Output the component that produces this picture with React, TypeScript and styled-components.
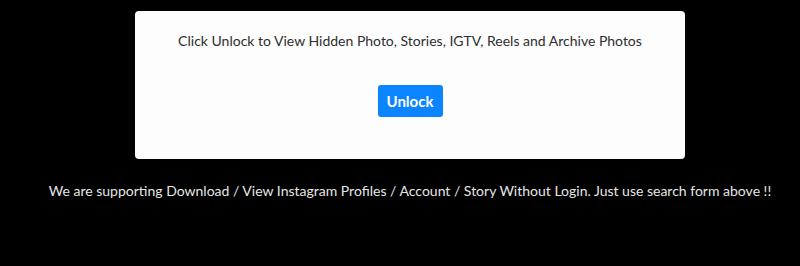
import React from "react";
import styled, { createGlobalStyle } from "styled-components";

const Global = createGlobalStyle`
  html, body { margin: 0; padding: 0; background: #000; }
  body { font-family: Lato, "Open Sans", sans-serif; }
`;

const Page = styled.div`
  width: 800px;
  height: 266px;
  background: #000;
  box-sizing: border-box;
  padding: 11px 0 0 20px;
  display: flex;
  flex-direction: column;
  align-items: center;
`;

const Card = styled.div`
  width: 550px;
  height: 148px;
  box-sizing: border-box;
  background: #fdfdfd;
  border-radius: 4px;
  display: flex;
  flex-direction: column;
  align-items: center;
  padding-top: 20px;
`;

const Message = styled.p`
  margin: 0;
  font-size: 14px;
  line-height: 20px;
  color: #2e2e2e;
`;

const UnlockButton = styled.button`
  margin-top: 34px;
  width: 65px;
  height: 32px;
  border: none;
  border-radius: 3px;
  background: #0a84ff;
  color: #fff;
  font-family: Lato, sans-serif;
  font-weight: 700;
  font-size: 15px;
  padding: 0;
  cursor: pointer;
`;

const Footer = styled.p`
  margin: 22px 0 0;
  font-size: 14px;
  line-height: 20px;
  color: #e6e6e6;
`;

export default function App() {
  return (
    <>
      <Global />
      <Page>
        <Card>
          <Message>Click Unlock to View Hidden Photo, Stories, IGTV, Reels and Archive Photos</Message>
          <UnlockButton>Unlock</UnlockButton>
        </Card>
        <Footer>We are supporting Download / View Instagram Profiles / Account / Story Without Login. Just use search form above !!</Footer>
      </Page>
    </>
  );
}
